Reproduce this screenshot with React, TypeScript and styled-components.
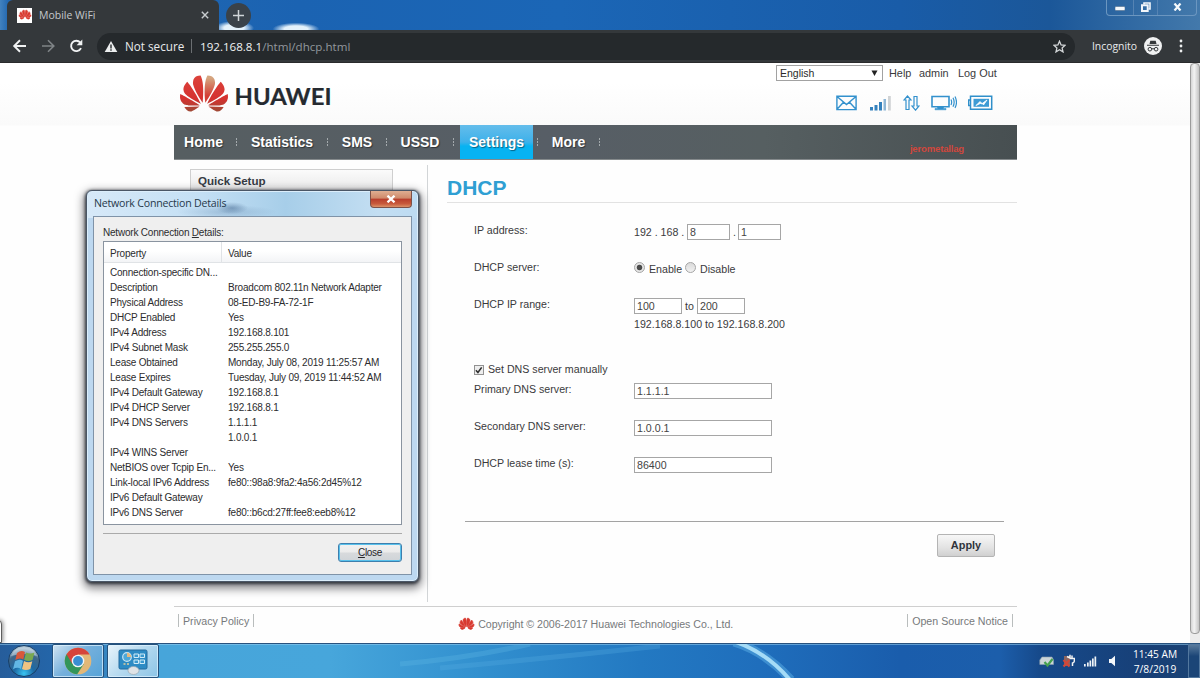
import React from 'react';
import styled, { createGlobalStyle } from 'styled-components';

const GlobalStyle = createGlobalStyle`
  * {
    box-sizing: border-box;
  }

  body {
    margin: 0;
    overflow: hidden;
  }
`;

const Screen = styled.div`
  position: relative;
  width: 1200px;
  height: 678px;
  display: flex;
  flex-direction: column;
  overflow: hidden;
  background: #fefefe;
  color: #3a3a3c;
  font-family: 'Liberation Sans', Arial, sans-serif;
  font-size: 10.65px;
  white-space: nowrap;
`;

/* ---------- browser ---------- */

const TabStrip = styled.div`
  height: 30px;
  display: flex;
  padding-left: 7px;
  background:
    radial-gradient(ellipse 20px 7px at 234px 28px, #e3f1fb 50%, transparent),
    radial-gradient(ellipse 26px 7px at 296px 29px, #e3f1fb 45%, transparent 90%),
    linear-gradient(90deg, #4282bf 0, #2368b0 8px, #1b63b2 300px, #1b66b6 560px, #195ca8 900px, #1b5799 1050px, #4379ab 1200px);
`;

const Tab = styled.div`
  width: 212px;
  height: 30px;
  display: flex;
  align-items: center;
  padding: 0 10px 0 10px;
  border-radius: 6px 6px 0 0;
  background: #34383b;
  color: #c4c8cb;
  font-family: 'Open Sans', sans-serif;
  font-size: 10.5px;
`;

const Favicon = styled.span`
  width: 15px;
  height: 15px;
  display: flex;
  align-items: center;
  justify-content: center;
  background: white;
`;

const TabTitle = styled.span`
  flex: 1;
  margin-left: 7px;
`;

const NewTab = styled.div`
  width: 25px;
  height: 25px;
  margin: 3px 0 0 7px;
  display: flex;
  align-items: center;
  justify-content: center;
  border-radius: 50%;
  background: #3a4249;
`;

const WindowButtons = styled.div`
  height: 16px;
  width: 91px;
  margin: 0 3px 0 auto;
  display: flex;
  border: 1px solid #6b96c0;
  border-top: none;
  border-radius: 0 0 4px 4px;
`;

const WindowButton = styled.span<{ $width: number }>`
  width: ${({ $width }) => $width}px;
  display: flex;
  align-items: center;
  justify-content: center;
  padding-bottom: 2px;

  & + & {
    border-left: 1px solid #5583b3;
  }
`;

const Toolbar = styled.div`
  height: 33px;
  display: flex;
  align-items: center;
  padding: 0 13px 0 12px;
  background: #34383b;
  border-bottom: 1px solid #2a2b2d;
  color: #e9ebec;
  font-family: 'Open Sans', sans-serif;
  font-size: 11.7px;
`;

const NavIcons = styled.div`
  width: 85px;
  display: flex;
  gap: 13.5px;
`;

const Address = styled.div`
  flex: 1;
  height: 27px;
  display: flex;
  align-items: center;
  padding: 0 9px 0 7px;
  border-radius: 14px;
  background: #25292c;
`;

const NotSecure = styled.span`
  width: 67px;
  margin-left: 7px;
  border-right: 1px solid #6b6f72;
  line-height: 14px;
`;

const Url = styled.span`
  flex: 1;
  margin-left: 8px;
  font-size: 11.6px;
  color: #91979c;

  b {
    font-weight: 400;
    color: #f1f3f4;
  }
`;

const Incognito = styled.div`
  display: flex;
  align-items: center;
  gap: 7px;
  margin: 0 13px 0 17px;
  font-size: 10.4px;
`;

/* ---------- router page ---------- */

const Page = styled.div`
  height: 580px;
  display: flex;
  background: linear-gradient(#ffffff 0, #ffffff 20px, #fafafa 62px, #fefefe 63px);
`;

const Site = styled.div`
  width: 843px;
  margin-left: 174px;
  display: flex;
  flex-direction: column;
`;

const ScrollTrack = styled.div`
  width: 10px;
  margin-left: auto;
  background: #ececec;
`;

const ScrollThumb = styled.div`
  height: 571px;
  border: 1px solid #9b9b9b;
  border-radius: 4px;
  background: linear-gradient(90deg, #d5d5d5, #f3f3f3 40%, #c4c4c4);
`;

const SiteHeader = styled.header`
  height: 62px;
  display: flex;
  justify-content: space-between;
  padding: 2px 21px 0 5px;
`;

const Brand = styled.div`
  display: flex;
  padding-top: 5px;
`;

const HeaderTools = styled.div`
  width: 220px;
`;

const Account = styled.div`
  height: 16px;
  display: flex;
  align-items: center;
  font-size: 10.9px;
`;

const Select = styled.span`
  width: 107px;
  height: 16px;
  display: flex;
  align-items: center;
  justify-content: space-between;
  padding: 0 4px 0 3px;
  margin-right: 6px;
  border: 1px solid #a2a2a2;
  background: white;
  color: #2a2a2a;
  font-size: 10.5px;
`;

const AccountLink = styled.span<{ $width: number }>`
  width: ${({ $width }) => $width}px;
  padding-bottom: 1px;
`;

const StatusIcons = styled.div`
  display: flex;
  gap: 11px;
  padding: 14px 0 0 60px;
`;

const Menu = styled.nav`
  height: 35px;
  display: flex;
  border-bottom: 1px solid #858a8c;
  background: linear-gradient(90deg, #565e61 0, #575e66 45%, #565f61 70%, #474f51 100%);
  color: white;
  font-size: 14px;
  font-weight: 700;
  text-shadow: 1px 1px 1px rgba(0, 0, 0, 0.45);
`;

const MenuItem = styled.span<{ $width: number; $active?: boolean }>`
  width: ${({ $width }) => $width}px;
  display: flex;
  align-items: center;
  justify-content: center;
  background: ${({ $active }) =>
    $active ? 'linear-gradient(#64bdeb 0, #3eb1ea 50%, #07b3f2 62%, #07b3f2)' : 'none'};
  margin: ${({ $active }) => ($active ? '0 4px 0 6px' : '0')};
`;

const MenuMark = styled.i`
  width: 1px;
  height: 9px;
  align-self: center;
  margin-top: 1px;
  background: repeating-linear-gradient(#a3a9ac 0 2px, transparent 2px 3px);
`;

const Signature = styled.span`
  margin: 18px 53px 0 auto;
  color: #d0473d;
  font-size: 9.6px;
  font-weight: 700;
  letter-spacing: -0.2px;
  text-shadow: none;
`;

const Body = styled.div`
  height: 446px;
  display: flex;
`;

const Sidebar = styled.aside`
  width: 254px;
  height: 437px;
  margin-top: 5px;
  padding: 4px 34px 0 16px;
  border-right: 1px solid #d2d5d7;
`;

const SidebarItem = styled.div`
  height: 26px;
  padding: 0 7px;
  border: 1px solid #cfcfcf;
  background: linear-gradient(#fbfbfb, #e6e6e6);
  font-size: 11.6px;
  font-weight: 700;
  line-height: 22px;
  color: #363b44;
`;

const Content = styled.main`
  flex: 1;
  padding: 15px 0 0 19px;
`;

const Title = styled.h1`
  height: 28px;
  margin: 0;
  border-bottom: 1px solid #e2e2e2;
  color: #2f9fd3;
  font-size: 21px;
  line-height: 25px;
`;

const Form = styled.div`
  padding: 20px 14px 0 27px;
`;

const Row = styled.div<{ $height?: number }>`
  height: ${({ $height = 37 }) => $height}px;
  display: flex;
`;

const Label = styled.span`
  width: 160px;
  line-height: 15px;
`;

const Control = styled.div`
  height: 18px;
  display: flex;
  align-items: center;
`;

const CheckControl = styled(Control)`
  height: 14px;
`;

const Input = styled.input<{ $width: number }>`
  width: ${({ $width }) => $width}px;
  height: 16px;
  padding: 0 2px 1px;
  border: 1px solid #a6a6a6;
  border-radius: 0;
  outline: none;
  background: white;
  color: #444;
  font: inherit;
`;

const Word = styled.span<{ $width: number }>`
  width: ${({ $width }) => $width}px;
`;

const Radio = styled.span<{ $checked?: boolean }>`
  width: 11px;
  height: 11px;
  margin: -4px 4px 0 0;
  border: 1px solid #a5a5a5;
  border-radius: 50%;
  background: ${({ $checked }) =>
    $checked
      ? 'radial-gradient(circle, #4b4b4b 0 2.4px, #e6e6e6 3.2px)'
      : 'linear-gradient(#dadada, #f1f1f1)'};
`;

const Checkbox = styled.span`
  width: 10px;
  height: 10px;
  margin: 1px 4px 0 0;
  display: flex;
  border: 1px solid #929292;
  background: #eeeeee;
`;

const Actions = styled.div`
  width: 539px;
  margin-left: 18px;
  padding: 12px 9px 0;
  display: flex;
  justify-content: flex-end;
  border-top: 1px solid #a3a3a3;
`;

const ApplyButton = styled.button`
  width: 58px;
  height: 23px;
  padding: 0 0 2px;
  border: 1px solid #b4b4b4;
  border-radius: 2px;
  background: linear-gradient(#f7f7f7, #e3e3e3 60%, #d0d0d0);
  color: #2f343b;
  font: 700 10.9px 'Liberation Sans', Arial, sans-serif;
`;

const Footer = styled.footer`
  height: 37px;
  display: flex;
  justify-content: space-between;
  padding: 7px 4px 0;
  border-top: 1px solid #cfcfcf;
  color: #76797b;
`;

const FooterLink = styled.span`
  height: 13px;
  padding: 0 4px;
  border: solid #b9bdbd;
  border-width: 0 1px;
  line-height: 14px;
`;

const Copyright = styled.span`
  height: 18px;
  display: flex;
  align-items: center;
  gap: 4px;
  margin: 1px 0 0 31px;
  letter-spacing: -0.03px;
`;

/* ---------- dialog ---------- */

const Dialog = styled.section`
  position: absolute;
  left: 86px;
  top: 190px;
  width: 333px;
  height: 392px;
  padding: 0 6px 6px;
  display: flex;
  flex-direction: column;
  border: 1px solid #4a5666;
  border-radius: 6px;
  background:
    radial-gradient(ellipse 16px 6px at 145px 17px, rgba(70, 105, 145, 0.5), transparent),
    radial-gradient(ellipse 50px 7px at 140px 21px, rgba(110, 145, 180, 0.4), transparent),
    linear-gradient(90deg, #d7e9f8 0, #c3dff4 35%, #a7cee9 60%, #c3def2 88%, #bddbf2 100%) no-repeat 0 0 / 100% 27px;
  background-color: #bdd8f0;
  box-shadow:
    inset 0 0 0 1px #dceefb,
    0 1px 3px 1px rgba(20, 25, 35, 0.75),
    0 4px 9px 3px rgba(30, 30, 35, 0.5);
  color: #2c2c2e;
  font-size: 10px;
  letter-spacing: -0.21px;
`;

const DialogTitle = styled.div`
  height: 25px;
  display: flex;
  justify-content: space-between;
  padding-left: 1px;
  line-height: 24px;
  color: #26384a;
  font-family: 'Open Sans', sans-serif;
  font-size: 10.6px;
`;

const CloseBox = styled.span`
  width: 42px;
  height: 17px;
  display: flex;
  align-items: center;
  justify-content: center;
  border: 1px solid #7d5148;
  border-top: none;
  border-radius: 0 0 4px 4px;
  background: linear-gradient(#dfae91 0, #cf8a6b 45%, #b83e2c 50%, #c85a3c 80%, #dc9268);
`;

const DialogBody = styled.div`
  flex: 1;
  display: flex;
  flex-direction: column;
  padding: 8px 9px 0;
  border: 1px solid #7f93a8;
  background: #efefef;
`;

const DialogLabel = styled.div`
  height: 16px;
  line-height: 15px;
`;

const Table = styled.div`
  height: 284px;
  border: 1px solid #8a94a0;
  background: white;
`;

const TableRow = styled.div<{ $head?: boolean }>`
  height: ${({ $head }) => ($head ? 21 : 15)}px;
  line-height: ${({ $head }) => ($head ? 23 : 15)}px;
  margin-bottom: ${({ $head }) => ($head ? 2 : 0)}px;
  border-bottom: ${({ $head }) => ($head ? '1px solid #e0e3e6' : 'none')};
  background: ${({ $head }) => ($head ? 'linear-gradient(#ffffff 45%, #f3f4f6)' : 'none')};
  display: flex;
`;

const Cell = styled.span<{ $head?: boolean }>`
  padding-left: 6px;
  border-right: ${({ $head }) => ($head ? '1px solid #e0e3e6' : 'none')};

  &:first-child {
    width: 118px;
  }

  &:last-child {
    border-right: none;
  }
`;

const DialogActions = styled.div`
  margin-top: 8px;
  padding-top: 9px;
  display: flex;
  justify-content: flex-end;
  border-top: 1px solid #aaaaaa;
`;

const CloseButton = styled.button`
  width: 64px;
  height: 19px;
  padding: 0;
  border: 1px solid #3d7fae;
  border-radius: 3px;
  box-shadow: inset 0 0 0 1px #58c1ec;
  background: linear-gradient(#f1f1f1 0, #ebebeb 48%, #d8dadc 52%, #cfd4d8);
  font: 10px 'Liberation Sans', Arial, sans-serif;
  letter-spacing: -0.3px;
  color: #26262a;
`;

/* ---------- taskbar ---------- */

const HiddenWindow = styled.div`
  position: absolute;
  left: -6px;
  top: 620px;
  width: 8px;
  height: 23px;
  border: 1px solid #5e5e5e;
  border-radius: 0 4px 0 0;
  box-shadow: 1px 0 4px #888;
  background: white;
`;

const Taskbar = styled.div`
  position: relative;
  height: 35px;
  display: flex;
  align-items: center;
  border-top: 1px solid #28527e;
  background: linear-gradient(90deg, #265d9b 0, #2465a8 50px, #47a5da 160px, #47a6db 330px, #3290cf 480px, #2379c2 640px, #1f6ebc 760px, #1a5dac 900px, #1c5eab 1000px, #16498a 1040px, #173f76 1150px, #1c4474 1200px);
  box-shadow: inset 0 1px 0 rgba(150, 205, 240, 0.55);
`;

const Swoosh = styled.svg`
  position: absolute;
  left: 400px;
  top: 0;
`;

const StartOrb = styled.div`
  width: 52px;
  padding-left: 7px;
  display: flex;
`;

const TaskButton = styled.div<{ $bright?: boolean }>`
  width: 52px;
  height: 34px;
  margin-right: 3px;
  display: flex;
  align-items: center;
  justify-content: center;
  border: 1px solid #24517c;
  border-radius: 2px;
  box-shadow: inset 0 0 0 1px rgba(225, 243, 255, 0.7);
  background: ${({ $bright }) =>
    $bright
      ? 'linear-gradient(135deg, #e9f4fb, #b4d9ef 50%, #8cc4e6)'
      : 'linear-gradient(135deg, #d1e4f2, #76b0dc 45%, #55a3d8)'};
`;

const Tray = styled.div`
  margin-left: auto;
  display: flex;
  align-items: center;
`;

const TrayIcons = styled.div`
  display: flex;
  align-items: center;
  gap: 8px;
`;

const Clock = styled.div`
  width: 66px;
  margin-left: 3px;
  padding-top: 1px;
  color: white;
  font-family: 'Open Sans', sans-serif;
  font-size: 10.2px;
  line-height: 15px;
  text-align: center;
`;

const ShowDesktop = styled.div`
  width: 12px;
  height: 34px;
  border: 1px solid #53789f;
  background: linear-gradient(#58799b, #1b4577 35%);
`;

const petals = [
  'M9.65 18.6c-.02-.08-.1-.08-.1-.08l-7.38.26c.8 1.43 2.15 2.53 3.56 2.2.96-.25 3.16-1.78 3.88-2.3.06-.05.04-.09.04-.09z',
  'M9.73 17.82C6.49 15.63.21 12.28.21 12.28c-.15.46-.2.9-.21 1.3v.07c0 1.07.4 1.82.4 1.82.8 1.69 2.34 2.2 2.34 2.2.7.3 1.4.31 1.4.31.12.02 4.4 0 5.54 0 .05 0 .08-.05.08-.05z',
  'M3.67 6.14S1.82 7.91 1.72 9.78v.35c.08 1.51 1.22 2.4 1.22 2.4 1.83 1.79 6.26 4.04 7.3 4.55 0 0 .06.03.1-.01l.02-.04C7.52 10.8 3.67 6.14 3.67 6.14z',
  'M9.06 3.19a3.42 3.42 0 0 0-2.57 3.15v.41c.03.6.16 1.05.16 1.05.66 2.9 3.86 7.65 4.55 8.65.05.05.1.03.1.03a.1.1 0 0 0 .06-.1c1.06-10.6-1.11-13.42-1.11-13.42-.32.02-1.19.23-1.19.23z',
];

const Petals = ({ width, detailed }: { width: number; detailed?: boolean }) => (
  <svg
    width={width}
    height={width * 0.77}
    viewBox='0 2.8 24 18.4'
    stroke={detailed ? 'none' : '#d8392f'}
    strokeWidth='1.1'
    overflow='visible'
  >
    <defs>
      <linearGradient id='petal' x1='0' y1='2.8' x2='0' y2='21' gradientUnits='userSpaceOnUse'>
        <stop offset='0' stopColor='#dc433b' />
        <stop offset='.65' stopColor='#d5312f' />
        <stop offset='1' stopColor='#9f4a36' />
      </linearGradient>
      <linearGradient id='tan' x1='0' y1='0' x2='0' y2='1'>
        <stop offset='.1' stopColor='#d5a57f' />
        <stop offset='.75' stopColor='#d33f36' />
      </linearGradient>
    </defs>
    {petals.map((d, i) => (
      <React.Fragment key={d}>
        <path d={d} fill={detailed ? 'url(#petal)' : '#d8392f'} />
        <path
          d={d}
          transform='translate(24 0) scale(-1 1)'
          fill={detailed ? (i === 3 ? 'url(#tan)' : 'url(#petal)') : '#d8392f'}
        />
      </React.Fragment>
    ))}
  </svg>
);

const details = [
  ['Connection-specific DN...', ''],
  ['Description', 'Broadcom 802.11n Network Adapter'],
  ['Physical Address', '08-ED-B9-FA-72-1F'],
  ['DHCP Enabled', 'Yes'],
  ['IPv4 Address', '192.168.8.101'],
  ['IPv4 Subnet Mask', '255.255.255.0'],
  ['Lease Obtained', 'Monday, July 08, 2019 11:25:57 AM'],
  ['Lease Expires', 'Tuesday, July 09, 2019 11:44:52 AM'],
  ['IPv4 Default Gateway', '192.168.8.1'],
  ['IPv4 DHCP Server', '192.168.8.1'],
  ['IPv4 DNS Servers', '1.1.1.1'],
  ['', '1.0.0.1'],
  ['IPv4 WINS Server', ''],
  ['NetBIOS over Tcpip En...', 'Yes'],
  ['Link-local IPv6 Address', 'fe80::98a8:9fa2:4a56:2d45%12'],
  ['IPv6 Default Gateway', ''],
  ['IPv6 DNS Server', 'fe80::b6cd:27ff:fee8:eeb8%12'],
];

const menu = [
  { name: 'Home', width: 59 },
  { name: 'Statistics', width: 90 },
  { name: 'SMS', width: 58 },
  { name: 'USSD', width: 66 },
  { name: 'Settings', width: 73, active: true },
  { name: 'More', width: 61 },
];

const Browser = () => (
  <>
    <TabStrip>
      <Tab>
        <Favicon>
          <Petals width={12} />
        </Favicon>
        <TabTitle>Mobile WiFi</TabTitle>
        <svg width='8' height='8' viewBox='0 0 8 8' stroke='#c8cccf' strokeWidth='1.4'>
          <path d='M.8.8l6.4 6.4M7.2.8L.8 7.2' />
        </svg>
      </Tab>
      <NewTab>
        <svg width='11' height='11' viewBox='0 0 11 11' stroke='#d0d5d8' strokeWidth='1.5'>
          <path d='M5.5 0v11M0 5.5h11' />
        </svg>
      </NewTab>
      <WindowButtons>
        <WindowButton $width={26}>
          <svg width='10' height='8'>
            <rect width='10' height='4' rx='1' y='3.5' fill='#f4f8fb' stroke='#49607c' strokeWidth='.5' />
          </svg>
        </WindowButton>
        <WindowButton $width={25}>
          <svg width='10' height='10' viewBox='0 0 10 10' fill='none' stroke='#f2f6fa' strokeWidth='1.6'>
            <path d='M3 2.5V1h6v6H7.5' />
            <path d='M1 3.3h5.7V9H1z' strokeWidth='2' />
          </svg>
        </WindowButton>
        <WindowButton $width={39}>
          <svg width='9' height='8' viewBox='0 0 9 8' stroke='#f5f9fc' strokeWidth='2.2'>
            <path d='M1.500 .5l6 7M7.500 .5l-6 7' />
          </svg>
        </WindowButton>
      </WindowButtons>
    </TabStrip>
    <Toolbar>
      <NavIcons>
        <svg width='15' height='14' viewBox='0 0 15 14' fill='none' stroke='#f0f2f3' strokeWidth='1.9'>
          <path d='M14 7H2.5M8 1.3L2.2 7 8 12.7' />
        </svg>
        <svg width='15' height='14' viewBox='0 0 15 14' fill='none' stroke='#7f8487' strokeWidth='1.6'>
          <path d='M1 7h11.500M7 1.300L12.800 7 7 12.700' />
        </svg>
        <svg width='15' height='14' viewBox='0 0 15 14' fill='none' stroke='#f0f2f3' strokeWidth='1.9'>
          <path d='M12 9.200A5.200 5.200 0 1 1 11.300 3.500' />
          <path d='M13.300 .6v5.700H7.600z' fill='#f0f2f3' stroke='none' />
        </svg>
      </NavIcons>
      <Address>
        <svg width='14' height='13' viewBox='0 0 14 13'>
          <path d='M7 1l6.300 11H.7z' fill='#eceeef' />
          <path d='M7 4.500v4M7 9.300v1.400' stroke='#25292c' strokeWidth='1.400' />
        </svg>
        <NotSecure>Not secure</NotSecure>
        <Url>
          <b>192.168.8.1</b>/html/dhcp.html
        </Url>
        <svg width='13' height='13' viewBox='0 0 13 13' fill='none' stroke='#d4d7d9' strokeWidth='1.3'>
          <path d='M6.500 1.200l1.600 3.700 4 .4-3 2.700.9 3.900-3.500-2.100L3 11.900 3.900 8l-3-2.700 4-.4z' />
        </svg>
      </Address>
      <Incognito>
        Incognito
        <svg width='18' height='18' viewBox='0 0 18 18'>
          <circle cx='9' cy='9' r='9' fill='#f0f1f2' />
          <path d='M6.300 3.800h5.400l.8 3.200h-7zM3 7.800h12v1H3z' fill='#34383b' />
          <path
            d='M7.700 12.200a1.800 1.800 0 1 1-3.600 0 1.800 1.800 0 0 1 3.600 0zM13.900 12.200a1.800 1.800 0 1 1-3.600 0 1.800 1.800 0 0 1 3.600 0zM7.700 12q1.300-.7 2.600 0'
            fill='none'
            stroke='#34383b'
          />
        </svg>
      </Incognito>
      <svg width='12' height='14' viewBox='0 0 12 14' fill='#eceeef'>
        <circle cx='6' cy='2' r='1.400' />
        <circle cx='6' cy='7' r='1.400' />
        <circle cx='6' cy='12' r='1.400' />
      </svg>
    </Toolbar>
  </>
);

const RouterHeader = () => (
  <SiteHeader>
    <Brand>
      <svg width='154' height='46' viewBox='0 0 154 46'>
        <g transform='translate(1 5)'>
          <Petals width={48} detailed />
        </g>
        <text
          x='55.500'
          y='35.300'
          textLength='97'
          lengthAdjust='spacingAndGlyphs'
          fill='#252a30'
          stroke='#252a30'
          strokeWidth='.2'
          fontFamily='Lato, sans-serif'
          fontSize='22.500'
          fontWeight='700'
        >
          HUAWEI
        </text>
      </svg>
    </Brand>
    <HeaderTools>
      <Account>
        <Select>
          English
          <svg width='7' height='6'>
            <path d='M.5 .5h6L3.500 6z' fill='#222' />
          </svg>
        </Select>
        <AccountLink $width={30}>Help</AccountLink>
        <AccountLink $width={39}>admin</AccountLink>
        <AccountLink $width={38}>Log Out</AccountLink>
      </Account>
      <StatusIcons>
        <svg width='21' height='16' viewBox='0 0 21 16' fill='none' stroke='#3391cd' strokeWidth='1.400'>
          <path d='M.9 1.200h19.200v13.400H.9zM1 1.500l9.500 8 9.500-8M1 14.300l6.500-7M20 14.300l-6.500-7' />
        </svg>
        <svg width='24' height='16' viewBox='-1 0 24 16'>
          <path d='M1 12h3v3.500H1zM5.500 10h3v5.500h-3zM10 7h3v8.500h-3z' fill='#3481bd' />
          <path d='M14.500 4h2.500v11.500h-2.500z' fill='#8fb7d6' />
          <path d='M19 1h2.800v14.500H19z' fill='#d0d3d5' />
        </svg>
        <svg width='17' height='16' viewBox='0 0 17 16' fill='none' stroke='#3391cd' strokeWidth='1.200'>
          <path d='M4.500 1L1 5h2v9.500h3V5h2zM12.500 15.200L9 11h2V1.500h3V11h2z' />
        </svg>
        <svg width='26' height='16' viewBox='0 0 26 16' fill='none' stroke='#3391cd' strokeWidth='1.600'>
          <path d='M1 1.500h17v10.300H1z' />
          <path d='M6.500 12h6v1.500H15v1.300H4v-1.300h2.500z' fill='#3391cd' strokeWidth='.5' />
          <path d='M20 4.500q1.300 2.700 0 5.500M22 2.800q2.300 4.500 0 9M24 1.500q3 5.700 0 11.400' strokeWidth='1.200' />
        </svg>
        <svg width='26' height='16' viewBox='2 0 26 16' fill='none' stroke='#2f8fca' strokeWidth='1.500'>
          <path d='M4.500 1.200h21.200v13H4.500zM4.500 5H2.500v5.500h2' />
          <path d='M7.500 3.800h15.500v8H7.500z' fill='#3d9bd4' stroke='none' />
          <path d='M10 10.500l4-4 1.500 2.500 5.500-4-3.500 5-1.800-2.200z' fill='white' stroke='white' strokeWidth='.8' />
        </svg>
      </StatusIcons>
    </HeaderTools>
  </SiteHeader>
);

const DhcpForm = () => (
  <Content>
    <Title>DHCP</Title>
    <Form>
      <Row>
        <Label>IP address:</Label>
        <Control>
          <Word $width={53}>192 . 168 .</Word>
          <Input $width={43} defaultValue='8' />
          <Word $width={8}>&nbsp;.</Word>
          <Input $width={43} defaultValue='1' />
        </Control>
      </Row>
      <Row>
        <Label>DHCP server:</Label>
        <Control>
          <Radio $checked />
          <Word $width={36}>Enable</Word>
          <Radio />
          Disable
        </Control>
      </Row>
      <Row $height={65}>
        <Label>DHCP IP range:</Label>
        <div>
          <Control>
            <Input $width={48} defaultValue='100' />
            <Word $width={15}>&nbsp;to</Word>
            <Input $width={48} defaultValue='200' />
          </Control>
          <Control>192.168.8.100 to 192.168.8.200</Control>
        </div>
      </Row>
      <Row $height={20}>
        <CheckControl>
          <Checkbox>
            <svg width='9' height='9' viewBox='0 0 9 9' fill='none' stroke='#303030' strokeWidth='1.8'>
              <path d='M1 4.200l2.300 2.500L7.500 1' />
            </svg>
          </Checkbox>
          Set DNS server manually
        </CheckControl>
      </Row>
      <Row>
        <Label>Primary DNS server:</Label>
        <Control>
          <Input $width={138} defaultValue='1.1.1.1' />
        </Control>
      </Row>
      <Row>
        <Label>Secondary DNS server:</Label>
        <Control>
          <Input $width={138} defaultValue='1.0.0.1' />
        </Control>
      </Row>
      <Row $height={65}>
        <Label>DHCP lease time (s):</Label>
        <Control>
          <Input $width={138} defaultValue='86400' />
        </Control>
      </Row>
    </Form>
    <Actions>
      <ApplyButton>Apply</ApplyButton>
    </Actions>
  </Content>
);

const ConnectionDetails = () => (
  <Dialog>
    <DialogTitle>
      Network Connection Details
      <CloseBox>
        <svg width='10' height='8' viewBox='0 0 10 8' stroke='#fff' strokeWidth='2.300'>
          <path d='M1.500 .7l7 6.600M8.500 .7l-7 6.600' />
        </svg>
      </CloseBox>
    </DialogTitle>
    <DialogBody>
      <DialogLabel>
        Network Connection <u>D</u>etails:
      </DialogLabel>
      <Table>
        <TableRow $head>
          <Cell $head>Property</Cell>
          <Cell $head>Value</Cell>
        </TableRow>
        {details.map(([property, value], i) => (
          <TableRow key={i}>
            <Cell>{property}</Cell>
            <Cell>{value}</Cell>
          </TableRow>
        ))}
      </Table>
      <DialogActions>
        <CloseButton>
          <u>C</u>lose
        </CloseButton>
      </DialogActions>
    </DialogBody>
  </Dialog>
);

const WindowsTaskbar = () => (
  <Taskbar>
    <Swoosh width='420' height='34' viewBox='0 0 420 34' fill='none'>
      <path d='M40 24Q150 14 260 2' stroke='#55ade0' strokeWidth='5' opacity='.3' />
      <path d='M0 20Q70 14 130 0' stroke='#5db5e3' strokeWidth='5' opacity='.35' />
      <path d='M334 -2Q366 8 391 36' stroke='#5cb0e6' strokeWidth='9' opacity='.5' />
      <path d='M336 -2Q367 9 390 36' stroke='#a5dcf7' strokeWidth='4' />
    </Swoosh>
    <StartOrb>
      <svg width='34' height='34' viewBox='0 0 34 34'>
        <defs>
          <radialGradient id='orb' cx='.5' cy='.9' r='.8'>
            <stop offset='0' stopColor='#38c4f2' />
            <stop offset='.4' stopColor='#1d6aa5' />
            <stop offset='.8' stopColor='#3f6688' />
            <stop offset='1' stopColor='#a3bbcc' />
          </radialGradient>
        </defs>
        <circle cx='17' cy='17' r='15.500' fill='url(#orb)' stroke='#173f68' />
        <path d='M4 12Q8 3 17 3t13 9q-12-4-26 0z' fill='#dce9f2' opacity='.45' />
        <path d='M10 9q4-3.500 8-1l-1.700 7.500q-3.500-2.300-8 .5z' fill='#d9583a' />
        <path d='M19 8.500q4 2 8.500 0L25.500 16q-4.500 2-8.300-.3z' fill='#79a850' />
        <path d='M8 17.300q4.500-2.800 8-.5L14 25q-3.500-2.500-8 .3z' fill='#62b7e4' />
        <path d='M17 17q4 2.300 8.300 .3L23.300 25q-4.500 2.200-8.300 0z' fill='#efc382' />
      </svg>
    </StartOrb>
    <TaskButton>
      <svg width='28' height='28' viewBox='0 0 28 28'>
        <circle cx='14' cy='14' r='13.300' fill='#e3b878' />
        <path d='M14 14L2.500 7.300A13.300 13.300 0 0 0 13.200 27.300L19.700 17.300z' fill='#32955a' />
        <path d='M14 7.500h11.600A13.300 13.300 0 0 0 2.500 7.300L8.300 17z' fill='#d6443b' />
        <circle cx='14' cy='14' r='6.300' fill='#f1f4f6' />
        <circle cx='14' cy='14' r='4.900' fill='#398ed2' />
      </svg>
    </TaskButton>
    <TaskButton $bright>
      <svg width='30' height='28' viewBox='0 0 30 28'>
        <rect x='1' y='3' width='28' height='19' rx='1.500' fill='#2d8bc4' stroke='#246b9e' />
        <circle cx='9' cy='10' r='4.300' fill='#4da8d8' stroke='#c8e5f4' strokeWidth='1.200' />
        <path d='M9 10V5.700a4.300 4.300 0 0 1 4.300 4.300z' fill='#e2b982' />
        <path d='M16 7h4.500v3.500H16zM22 7h4.500v3.500H22zM16 13h4.500v3.500H16zM22 13h4.500v3.500H22z' fill='#3b99cf' stroke='#d0ebf7' />
        <path d='M5.500 17h2M9 17h2' stroke='#e2cf9c' strokeWidth='1.500' />
        <ellipse cx='15.500' cy='23.500' rx='5.500' ry='4' fill='#dfe3e6' stroke='#98a6b0' strokeWidth='.7' />
      </svg>
    </TaskButton>
    <Tray>
      <TrayIcons>
        <svg width='15' height='14' viewBox='0 0 15 14'>
          <path d='M3 3h10l1.500 3v4.500H.8V6z' fill='#ccd5d8' stroke='#8ca0ac' strokeWidth='.6' />
          <path d='M5.500 8l3 3.500L13.500 5' fill='none' stroke='#44a04f' strokeWidth='2.200' />
        </svg>
        <svg width='13' height='14' viewBox='0 0 13 14'>
          <path d='M2 2h6v10H2z' fill='#8a6560' />
          <path d='M5 2.500l3 1.500V.8M10 1.500v3M8 4.500h4.500q.3 4-2 4.500v3' fill='none' stroke='#f4f4f4' strokeWidth='1.500' />
          <path d='M1.500 6l6 6.500M7.500 6l-6 6.500' stroke='#d24739' strokeWidth='2.200' />
        </svg>
        <svg width='14' height='12' viewBox='0 0 14 12' fill='#eef3f7'>
          <path d='M1 9h1.700v2.500H1zM4 7.500h1.700v4H4zM6.500 5.500h1.700v6H6.500zM9 3.500h1.700v8H9zM11.500 1.500h1.700v10h-1.700z' />
        </svg>
        <svg width='14' height='12' viewBox='0 0 14 12' fill='#f4f7fa'>
          <path d='M4 4h2.300L10 .8v10.500L6.300 8H4z' />
        </svg>
      </TrayIcons>
      <Clock>
        11:45 AM
        <br />
        7/8/2019
      </Clock>
      <ShowDesktop />
    </Tray>
  </Taskbar>
);

const App = () => {
  return (
    <Screen>
      <GlobalStyle />
      <Browser />
      <Page>
        <Site>
          <RouterHeader />
          <Menu>
            {menu.map((item) => (
              <React.Fragment key={item.name}>
                <MenuItem $width={item.width} $active={item.active}>
                  {item.name}
                </MenuItem>
                {item.name === 'Home' && <MenuItem $width={3} />}
                <MenuMark />
              </React.Fragment>
            ))}
            <Signature>jerometallag</Signature>
          </Menu>
          <Body>
            <Sidebar>
              <SidebarItem>Quick Setup</SidebarItem>
            </Sidebar>
            <DhcpForm />
          </Body>
          <Footer>
            <FooterLink>Privacy Policy</FooterLink>
            <Copyright>
              <Petals width={15} />
              Copyright © 2006-2017 Huawei Technologies Co., Ltd.
            </Copyright>
            <FooterLink>Open Source Notice</FooterLink>
          </Footer>
        </Site>
        <ScrollTrack>
          <ScrollThumb />
        </ScrollTrack>
      </Page>
      <ConnectionDetails />
      <HiddenWindow />
      <WindowsTaskbar />
    </Screen>
  );
};

export default App;
